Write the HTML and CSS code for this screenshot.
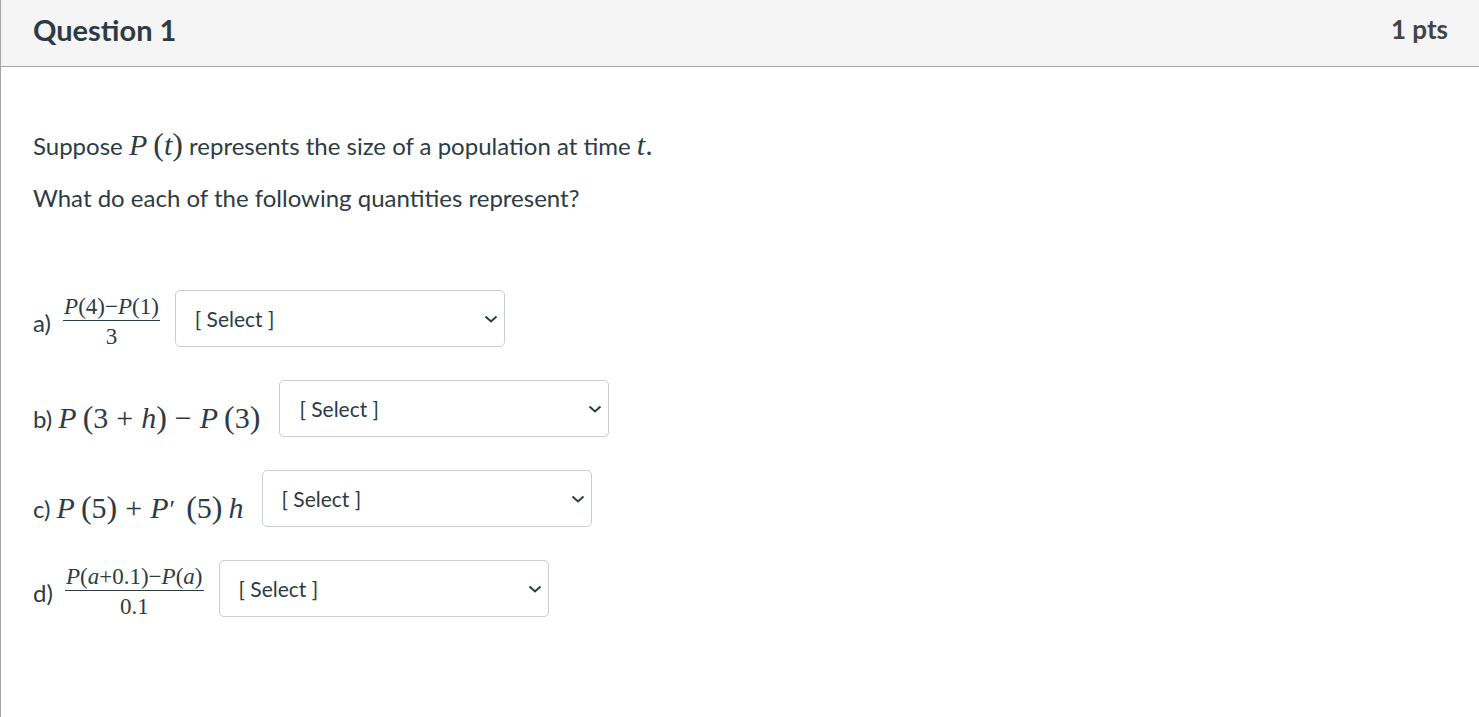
FILE: index.html
```html
<!DOCTYPE html>
<html>
<head>
<meta charset="utf-8">
<link rel="stylesheet" href="styles.css">
</head>
<body>
<div class="card">
  <div class="header">
    <span class="title">Question 1</span>
    <span class="pts">1 pts</span>
  </div>
  <div class="content">
    <p class="para">Suppose <span class="m"><i>P</i><span class="lp">(</span><i>t</i><span class="rp">)</span></span> represents the size of a population at time <span class="m"><i>t</i>.</span></p>
    <p class="para para2">What do each of the following quantities represent?</p>

    <div class="row row-a">
      <span class="lab">a) <span class="frac"><span class="num"><i>P</i>(4)−<i>P</i>(1)</span><span class="den">3</span></span></span>
      <div class="sel"><span>[ Select ]</span><svg class="chev" width="14" height="8" viewBox="0 0 14 8"><path d="M1.5 1.5 L7 6.5 L12.5 1.5" fill="none" stroke="#2d3b45" stroke-width="2"/></svg></div>
    </div>

    <div class="row row-b">
      <span class="lab">b) <span class="m"><i>P</i><span class="lp">(</span>3<span class="op">+</span><i>h</i><span class="rp">)</span><span class="op">−</span><i>P</i><span class="lp">(</span>3<span class="rp">)</span></span></span>
      <div class="sel"><span>[ Select ]</span><svg class="chev" width="14" height="8" viewBox="0 0 14 8"><path d="M1.5 1.5 L7 6.5 L12.5 1.5" fill="none" stroke="#2d3b45" stroke-width="2"/></svg></div>
    </div>

    <div class="row row-c">
      <span class="lab">c) <span class="m"><i>P</i><span class="lp">(</span>5<span class="rp">)</span><span class="op">+</span><i>P</i><span class="prime">′</span><span class="lp">(</span>5<span class="rp">)</span><i class="h">h</i></span></span>
      <div class="sel"><span>[ Select ]</span><svg class="chev" width="14" height="8" viewBox="0 0 14 8"><path d="M1.5 1.5 L7 6.5 L12.5 1.5" fill="none" stroke="#2d3b45" stroke-width="2"/></svg></div>
    </div>

    <div class="row row-d">
      <span class="lab">d) <span class="frac"><span class="num"><i>P</i>(<i>a</i>+0.1)−<i>P</i>(<i>a</i>)</span><span class="den">0.1</span></span></span>
      <div class="sel"><span>[ Select ]</span><svg class="chev" width="14" height="8" viewBox="0 0 14 8"><path d="M1.5 1.5 L7 6.5 L12.5 1.5" fill="none" stroke="#2d3b45" stroke-width="2"/></svg></div>
    </div>
  </div>
</div>
</body>
</html>
```

FILE: styles.css
```css
* { box-sizing: border-box; }
html, body { margin: 0; padding: 0; background: #fff; }
body {
  font-family: Lato, "Noto Sans", sans-serif;
  color: #2d3b45;
  width: 1479px;
  height: 717px;
  overflow: hidden;
}
.card {
  border-left: 1px solid #a5a5a5;
  height: 717px;
}
.header {
  height: 67px;
  background: #f5f5f5;
  border-bottom: 1px solid #a5a5a5;
  display: flex;
  align-items: center;
  justify-content: space-between;
  padding: 0 31px 8px 32px;
}
.title {
  font-size: 29px;
  font-weight: 700;
}
.pts {
  font-size: 26px;
  font-weight: 700;
  color: #444;
}
.content {
  padding: 0 32px;
}
.para {
  font-size: 24px;
  margin: 0;
  line-height: 32px;
}
.para:first-child { padding-top: 61px; }
.para2 { margin-top: 20px; margin-bottom: 76px; }

.m {
  font-family: "Liberation Serif", "DejaVu Serif", serif;
  font-size: 30px;
  line-height: 1;
}
.m i { font-style: italic; }
.lp { margin-left: 6px; font-size: 32px; }
.rp { font-size: 32px; }
.op { margin: 0 8px; }
.prime { font-size: 26px; margin-left: 1px; margin-right: 5px; }
.h { margin-left: 6px; }

.row {
  display: flex;
  align-items: center;
  height: 57px;
  margin-bottom: 33px;
}
.lab {
  font-size: 24px;
  white-space: nowrap;
  line-height: 1;
}
.row-a .lab, .row-d .lab { margin-top: 6px; }
.row-b .lab, .row-c .lab { margin-top: 17px; }
.row-a .sel { margin-left: 15px; }
.row-d .sel { margin-left: 15px; }
.row-b .sel { margin-left: 19px; }
.row-c .sel { margin-left: 18px; }

.frac {
  display: inline-flex;
  flex-direction: column;
  align-items: center;
  vertical-align: 18px;
  font-family: "Liberation Serif", "DejaVu Serif", serif;
  font-size: 23px;
  margin-left: 6px;
}
.num {
  line-height: 1;
  padding: 0 1px 2px;
  border-bottom: 1px solid #2d3b45;
}
.den {
  line-height: 1;
  padding-top: 4px;
}

.sel {
  width: 330px;
  height: 57px;
  border: 1px solid #c7cdd1;
  border-radius: 5px;
  display: flex;
  align-items: center;
  justify-content: space-between;
  padding: 0 6px 0 19px;
  font-size: 21px;
  color: #2d3b45;
  flex-shrink: 0;
}
.chev { display: block; }
```
